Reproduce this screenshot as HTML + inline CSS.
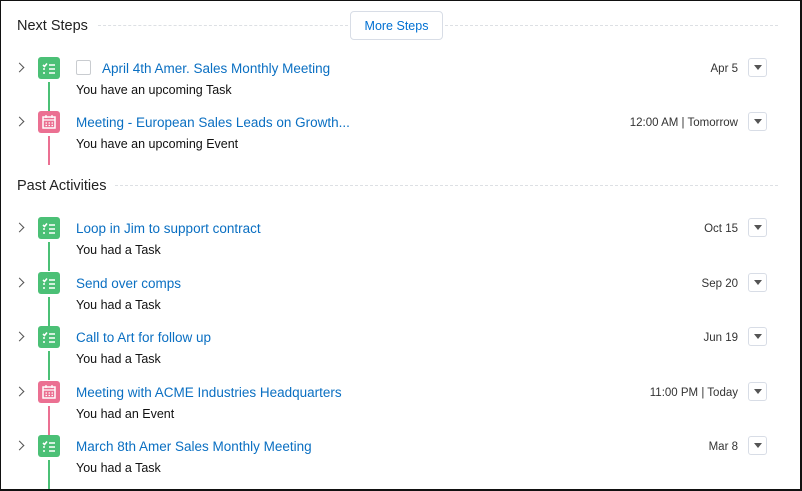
<!DOCTYPE html><html><head><style>
*{margin:0;padding:0;box-sizing:border-box}
body{width:802px;height:491px;overflow:hidden;background:#fff;font-family:"Liberation Sans",sans-serif;position:relative}
.frame{position:absolute;left:0;top:0;width:802px;height:491px;border:1.5px solid #111;border-right-width:2px;border-bottom-width:2px}
.h{position:absolute;font-size:14.5px;color:#222}
.dots{position:absolute;height:0;border-top:1px dashed #dde0e4}
.btn{position:absolute;left:350px;top:11px;width:93px;height:29px;border:1px solid #d8dde6;border-radius:4px;font-size:12.5px;color:#0070d2;text-align:center;line-height:29px;background:#fff}
.row{position:absolute;left:0;width:802px;height:55px}
.chev{position:absolute;left:16px;top:7px;width:7px;height:7px;border-right:1.5px solid #555;border-top:1.5px solid #555;transform:rotate(45deg)}
.ic{position:absolute;left:38px;top:0;width:22px;height:22px;border-radius:3px}
.t{background:#4bc076}.e{background:#eb7092}
.line{position:absolute;left:48px;top:25px;width:2px;height:29px}
.title{position:absolute;left:76px;top:4px;font-size:13.5px;color:#0a6fc2;white-space:nowrap}
.sub{position:absolute;left:76px;top:26px;font-size:12.5px;color:#111}
.date{position:absolute;right:64px;top:6px;font-size:11.5px;color:#333}
.dd{position:absolute;left:748px;top:1px;width:19px;height:19px;border:1px solid #d8dde6;border-radius:3px}
.dd:after{content:"";position:absolute;left:5px;top:6px;border-left:4px solid transparent;border-right:4px solid transparent;border-top:5px solid #555}
.cb{position:absolute;left:76px;top:3px;width:15px;height:15px;border:1px solid #c9ccd0;border-radius:2px}
</style></head><body>
<div class="h" style="left:17px;top:18px">Next Steps</div>
<div class="dots" style="left:98px;top:25px;width:250px"></div>
<div class="dots" style="left:445px;top:25px;width:333px"></div>
<div class="btn">More Steps</div>

<div class="h" style="left:17px;top:178px">Past Activities</div>
<div class="dots" style="left:115px;top:185px;width:663px"></div>

<div class="row" style="top:57px"><div class="chev"></div><div class="ic t"><svg width="22" height="22"><path d="M5 8l1.5 1.5L9 6.5M11 8h6M5 12h2M11 12h6M5 16h2M11 16h6" stroke="#fff" stroke-width="1.6" fill="none"/></svg></div><div class="line t"></div><div class="cb"></div><div class="title" style="left:102px">April 4th Amer. Sales Monthly Meeting</div><div class="sub">You have an upcoming Task</div><div class="date">Apr 5</div><div class="dd"></div></div>

<div class="row" style="top:111px"><div class="chev"></div><div class="ic e"><svg width="22" height="22"><rect x="5" y="6" width="12" height="11" fill="none" stroke="#fff" stroke-width="1.5"/><path d="M5 9h12M8 4v3M14 4v3M7.5 12h1.5M10.5 12h1.5M13.5 12h1.5M7.5 14.5h1.5M10.5 14.5h1.5M13.5 14.5h1.5" stroke="#fff" stroke-width="1.3"/></svg></div><div class="line e"></div><div class="title">Meeting - European Sales Leads on Growth...</div><div class="sub">You have an upcoming Event</div><div class="date">12:00 AM | Tomorrow</div><div class="dd"></div></div>

<div class="row" style="top:217px"><div class="chev"></div><div class="ic t"><svg width="22" height="22"><path d="M5 8l1.5 1.5L9 6.5M11 8h6M5 12h2M11 12h6M5 16h2M11 16h6" stroke="#fff" stroke-width="1.6" fill="none"/></svg></div><div class="line t"></div><div class="title">Loop in Jim to support contract</div><div class="sub">You had a Task</div><div class="date">Oct 15</div><div class="dd"></div></div>

<div class="row" style="top:272px"><div class="chev"></div><div class="ic t"><svg width="22" height="22"><path d="M5 8l1.5 1.5L9 6.5M11 8h6M5 12h2M11 12h6M5 16h2M11 16h6" stroke="#fff" stroke-width="1.6" fill="none"/></svg></div><div class="line t"></div><div class="title">Send over comps</div><div class="sub">You had a Task</div><div class="date">Sep 20</div><div class="dd"></div></div>

<div class="row" style="top:326px"><div class="chev"></div><div class="ic t"><svg width="22" height="22"><path d="M5 8l1.5 1.5L9 6.5M11 8h6M5 12h2M11 12h6M5 16h2M11 16h6" stroke="#fff" stroke-width="1.6" fill="none"/></svg></div><div class="line t"></div><div class="title">Call to Art for follow up</div><div class="sub">You had a Task</div><div class="date">Jun 19</div><div class="dd"></div></div>

<div class="row" style="top:381px"><div class="chev"></div><div class="ic e"><svg width="22" height="22"><rect x="5" y="6" width="12" height="11" fill="none" stroke="#fff" stroke-width="1.5"/><path d="M5 9h12M8 4v3M14 4v3M7.5 12h1.5M10.5 12h1.5M13.5 12h1.5M7.5 14.5h1.5M10.5 14.5h1.5M13.5 14.5h1.5" stroke="#fff" stroke-width="1.3"/></svg></div><div class="line e"></div><div class="title">Meeting with ACME Industries Headquarters</div><div class="sub">You had an Event</div><div class="date">11:00 PM | Today</div><div class="dd"></div></div>

<div class="row" style="top:435px"><div class="chev"></div><div class="ic t"><svg width="22" height="22"><path d="M5 8l1.5 1.5L9 6.5M11 8h6M5 12h2M11 12h6M5 16h2M11 16h6" stroke="#fff" stroke-width="1.6" fill="none"/></svg></div><div class="line t"></div><div class="title">March 8th Amer Sales Monthly Meeting</div><div class="sub">You had a Task</div><div class="date">Mar 8</div><div class="dd"></div></div>

<div class="frame"></div>
</body></html>
